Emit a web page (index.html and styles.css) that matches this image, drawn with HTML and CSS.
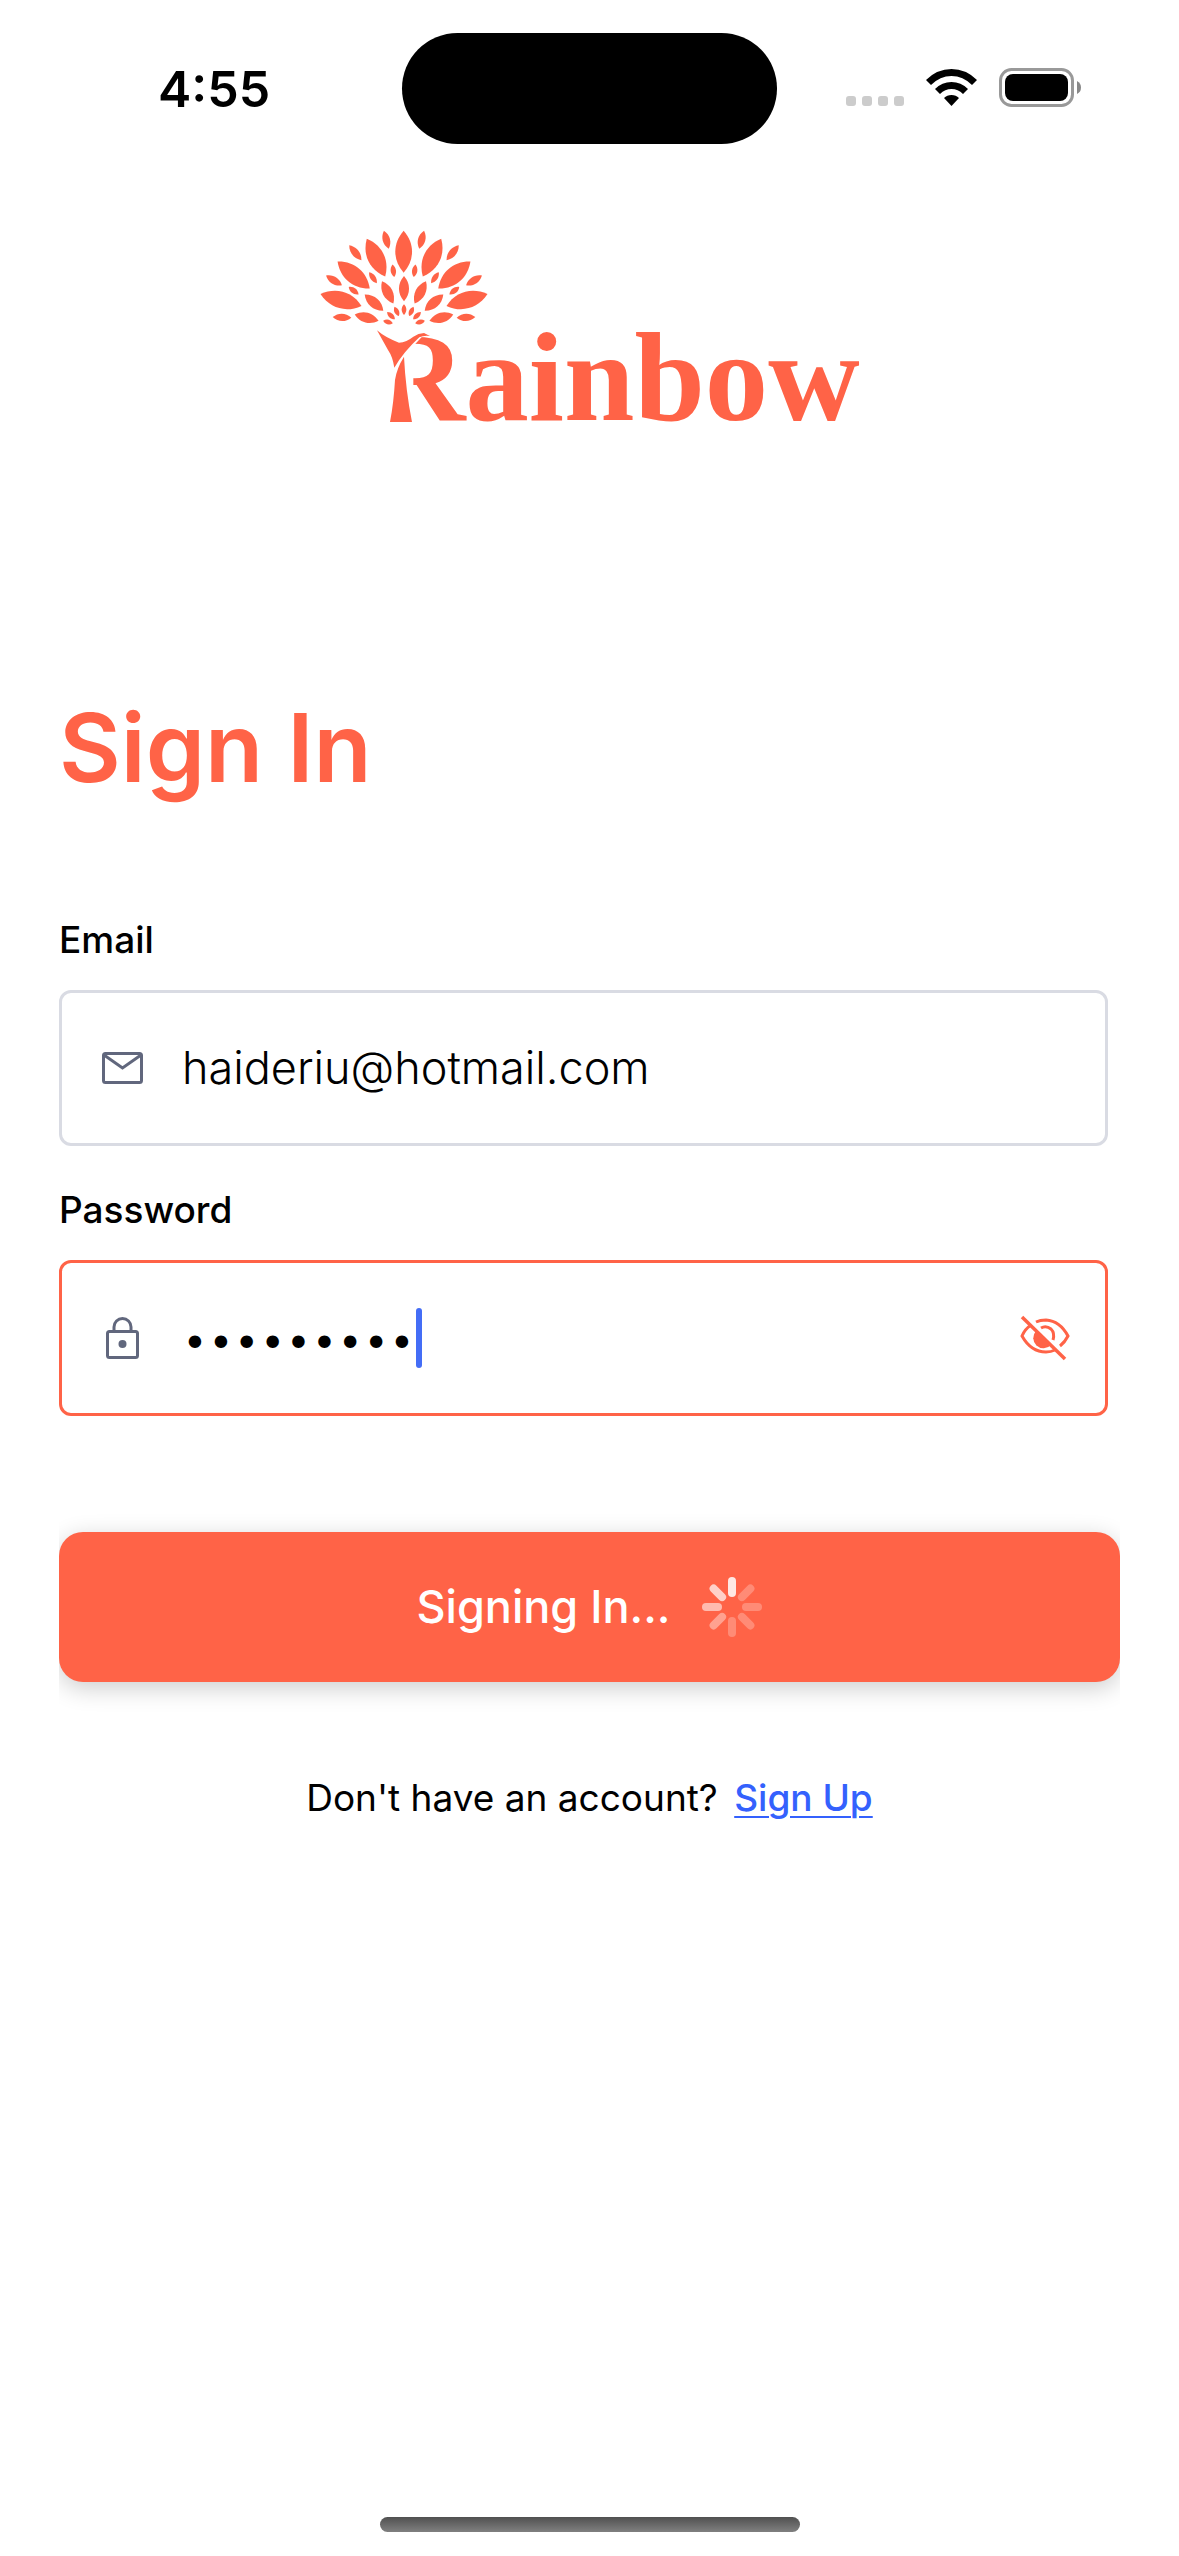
FILE: index.html
```html
<!DOCTYPE html>
<html lang="en">
<head>
<meta charset="utf-8">
<meta name="viewport" content="width=device-width, initial-scale=1">
<title>Sign In</title>
<link rel="stylesheet" href="styles.css">
</head>
<body>
<header class="status">
  <time class="status-time">4:55</time>
  <div class="island"></div>
  <div class="status-icons">
    <svg class="signal" viewBox="0 0 58 10"><rect width="10" height="10" rx="3"/><rect x="16" width="10" height="10" rx="3"/><rect x="32" width="10" height="10" rx="3"/><rect x="48" width="10" height="10" rx="3"/></svg>
    <svg class="wifi" viewBox="0 0 51 37"><path d="M0 11Q11 0 25.500 0T51 11L46 16Q37 7 25.500 7T5 16ZM9 20Q16 13 25.500 13T42 20L37 25Q32 20 25.500 20T14 25ZM18 29Q21 26 25.500 26T33 29L25.500 37Z"/></svg>
    <svg class="battery" viewBox="0 0 83 39"><rect x="1.500" y="1.500" width="72" height="36" rx="11" fill="none" stroke="#999" stroke-width="3"/><rect x="6" y="6" width="63" height="27" rx="8"/><path d="M78 13Q82 15 82 19.500T78 26Z" fill="#888"/></svg>
  </div>
</header>

<main class="screen">
  <svg class="logo" viewBox="60 54 1620 720" role="img" aria-label="Rainbow">
    <defs>
      <path id="leaf" d="M0-50C67-20 67 20 0 50C-67 20-67-20 0-50Z"/>
      <g id="crown-side">
        <use href="#leaf" transform="translate(228 143) rotate(-26) scale(.5 1.260)"/>
        <use href="#leaf" transform="translate(161 195) rotate(-50) scale(.5 1.260)"/>
        <use href="#leaf" transform="translate(123 270) rotate(-74) scale(.5 1.280)"/>
        <use href="#leaf" transform="translate(200 323) rotate(-75) scale(.3 .74)"/>
        <use href="#leaf" transform="translate(263 247) rotate(-27) scale(.3 .75)"/>
        <use href="#leaf" transform="translate(222 278) rotate(-49) scale(.3 .74)"/>
        <use href="#leaf" transform="translate(259 89) rotate(-15) scale(.22 .56)"/>
        <use href="#leaf" transform="translate(166 128) rotate(-39) scale(.22 .58)"/>
        <use href="#leaf" transform="translate(102 211) rotate(-58) scale(.22 .56)"/>
        <use href="#leaf" transform="translate(126 322) rotate(-88) scale(.22 .56)"/>
        <use href="#leaf" transform="translate(280 182) rotate(-8) scale(.16 .38)"/>
        <use href="#leaf" transform="translate(219 203) rotate(-35) scale(.16 .4)"/>
        <use href="#leaf" transform="translate(161 242) rotate(-53) scale(.16 .37)"/>
        <use href="#leaf" transform="translate(290 304) rotate(-25) scale(.14 .31)"/>
        <use href="#leaf" transform="translate(273 317) rotate(-47) scale(.14 .32)"/>
        <use href="#leaf" transform="translate(264 336) rotate(-75) scale(.14 .3)"/>
      </g>
    </defs>
    <use href="#crown-side"/>
    <use href="#crown-side" transform="translate(624 0) scale(-1 1)"/>
    <use href="#leaf" transform="translate(311 125) scale(.5 1.260)"/>
    <use href="#leaf" transform="translate(312 236) scale(.3 .76)"/>
    <use href="#leaf" transform="translate(312 299) scale(.14 .32)"/>
    <text class="wordmark" x="222" y="630">Rainbow</text>
    <path class="clearing" d="M220 366H366V380L340 408V590H366V645H220Z"/>
    <path d="M231 361Q256 383 297 398Q320 396 340 380Q355 370 372 369L390 378Q370 376 358 382Q312 424 283 473Q278 440 264 420Z"/>
    <path d="M312 440Q317 540 336 636H270Q281 580 285 510Q290 475 312 440Z"/>
  </svg>

  <h1 class="title">Sign In</h1>

  <form class="form">
    <div class="field">
      <label class="label" for="email">Email</label>
      <div class="box">
        <svg class="icon" viewBox="0 0 48 48"><g fill="none" stroke="#61677d" stroke-width="3"><rect x="5.500" y="9.500" width="38" height="29" rx="2"/><path d="M6 11L24.500 24L43 11"/></g></svg>
        <input class="input" id="email" type="email" value="haideriu@hotmail.com">
      </div>
    </div>
    <div class="field">
      <label class="label" for="password">Password</label>
      <div class="box box-active">
        <svg class="icon" viewBox="0 0 48 48"><g fill="none" stroke="#61677d" stroke-width="3"><rect x="9.500" y="17.500" width="30" height="26" rx="2"/><path d="M16 17V13A8.500 8.500 0 0 1 33 13V17"/></g><circle cx="24.500" cy="30" r="4" fill="#61677d"/></svg>
        <input class="input input-secret" id="password" type="password" value="123456789">
        <span class="caret"></span>
        <button class="reveal" type="button" aria-label="Show password">
          <svg viewBox="0 0 50 46"><g fill="none" stroke="#ff6347" stroke-width="3"><path d="M2 2L45 44" stroke-width="3.500"/><path d="M10.500 10.500Q5 14 2 21Q11 37 26 37Q31 37 35 35M16 7Q20 5 26 5Q40 6 48 21Q45 27 40 31"/><path d="M21 13Q26 10 31 14Q35 18 33 25"/></g><path d="M16 16A10 10 0 0 0 31 30Z" fill="#ff6347"/></svg>
        </button>
      </div>
    </div>
    <div class="submit-wrap">
      <button class="submit" type="submit">
        <span>Signing In...</span>
        <svg class="spinner" viewBox="-30 -30 60 60"><defs><rect id="blade" x="-4" y="-30" width="8" height="20" rx="4"/></defs><g fill="#fff"><use href="#blade" opacity=".85"/><use href="#blade" transform="rotate(45)" opacity=".26"/><use href="#blade" transform="rotate(90)" opacity=".26"/><use href="#blade" transform="rotate(135)" opacity=".26"/><use href="#blade" transform="rotate(180)" opacity=".26"/><use href="#blade" transform="rotate(225)" opacity=".4"/><use href="#blade" transform="rotate(270)" opacity=".56"/><use href="#blade" transform="rotate(315)" opacity=".7"/></g></svg>
      </button>
    </div>
  </form>

  <p class="signup">Don't have an account? <a class="signup-link" href="#">Sign Up</a></p>
</main>

<footer class="home"><div class="home-bar"></div></footer>
</body>
</html>
```
FILE: styles.css
```css
* { box-sizing: border-box; }

body {
  margin: 0;
  min-height: 100vh;
  display: flex;
  flex-direction: column;
  background: #fff;
  color: #000;
  font-family: Inter, "Liberation Sans", sans-serif;
}

svg { display: block; }

/* Status bar */
.status {
  display: grid;
  grid-template-columns: 1fr 375px 1fr;
  align-items: center;
  height: 177px;
}
.status-time {
  padding-left: 158px;
  font-size: 50px;
  line-height: 60px;
  font-weight: 600;
}
.island { height: 111px; border-radius: 56px; background: #000; }
.status-icons {
  display: flex;
  align-items: flex-end;
  justify-content: flex-end;
  gap: 22px;
  padding: 0 97px 2px 0;
}
.signal { width: 58px; height: 10px; margin-bottom: 1px; fill: #ccc; }
.wifi { width: 51px; height: 37px; margin-bottom: 1px; }
.battery { width: 83px; height: 39px; }

/* Brand */
.screen { padding: 51px 59px 0; }
.logo { width: 540px; height: 240px; margin: 0 auto; fill: #ff6347; }
.wordmark { font: bold 380px "Liberation Serif", serif; }
.clearing { fill: #fff; }

.title {
  margin: 220px 0 0;
  color: #ff6347;
  font-size: 95px;
  line-height: 120px;
  font-weight: 600;
}

/* Form */
.form { margin-top: 108px; }
.field { margin: 0 12px 40px 0; }
.label {
  display: block;
  margin-bottom: 26px;
  font-size: 37px;
  line-height: 48px;
  font-weight: 500;
}
.box {
  display: flex;
  align-items: center;
  height: 156px;
  padding: 0 35px 0 36px;
  border: 3px solid #d9dbe3;
  border-radius: 12px;
}
.box-active { border-color: #ff6347; }
.icon { flex: none; width: 48px; height: 48px; margin-right: 36px; }
.input {
  flex: 1;
  min-width: 0;
  padding: 0;
  border: 0;
  outline: 0;
  background: none;
  color: #000;
  font: 300 45px/60px Inter, "Liberation Sans", sans-serif;
}
.input-secret { flex: none; width: 234px; font-size: 46px; }
.caret { width: 6px; height: 60px; border-radius: 3px; background: #446df6; }
.reveal {
  width: 50px;
  height: 46px;
  margin-left: auto;
  padding: 0;
  border: 0;
  background: none;
}

.submit-wrap { margin-top: 116px; clip-path: inset(-40px 0); }
.submit {
  display: flex;
  align-items: center;
  justify-content: center;
  gap: 32px;
  width: 100%;
  height: 150px;
  border: 0;
  border-radius: 24px;
  background: #ff6347;
  box-shadow: 0 6px 24px rgba(0, 0, 0, 0.2);
  color: #fff;
  font: 500 45px/60px Inter, "Liberation Sans", sans-serif;
}
.spinner { width: 60px; height: 60px; }

.signup {
  margin: 92px 0 0;
  text-align: center;
  font-size: 37px;
  line-height: 48px;
}
.signup-link {
  margin-left: 6px;
  color: #3461fd;
  font-weight: 500;
  text-decoration-thickness: 2px;
  text-underline-offset: 5px;
}

/* Home indicator */
.home { margin-top: auto; padding-bottom: 24px; }
.home-bar {
  width: 420px;
  height: 15px;
  margin: 0 auto;
  border-radius: 8px;
  background: linear-gradient(#505050, #808080);
}
```
